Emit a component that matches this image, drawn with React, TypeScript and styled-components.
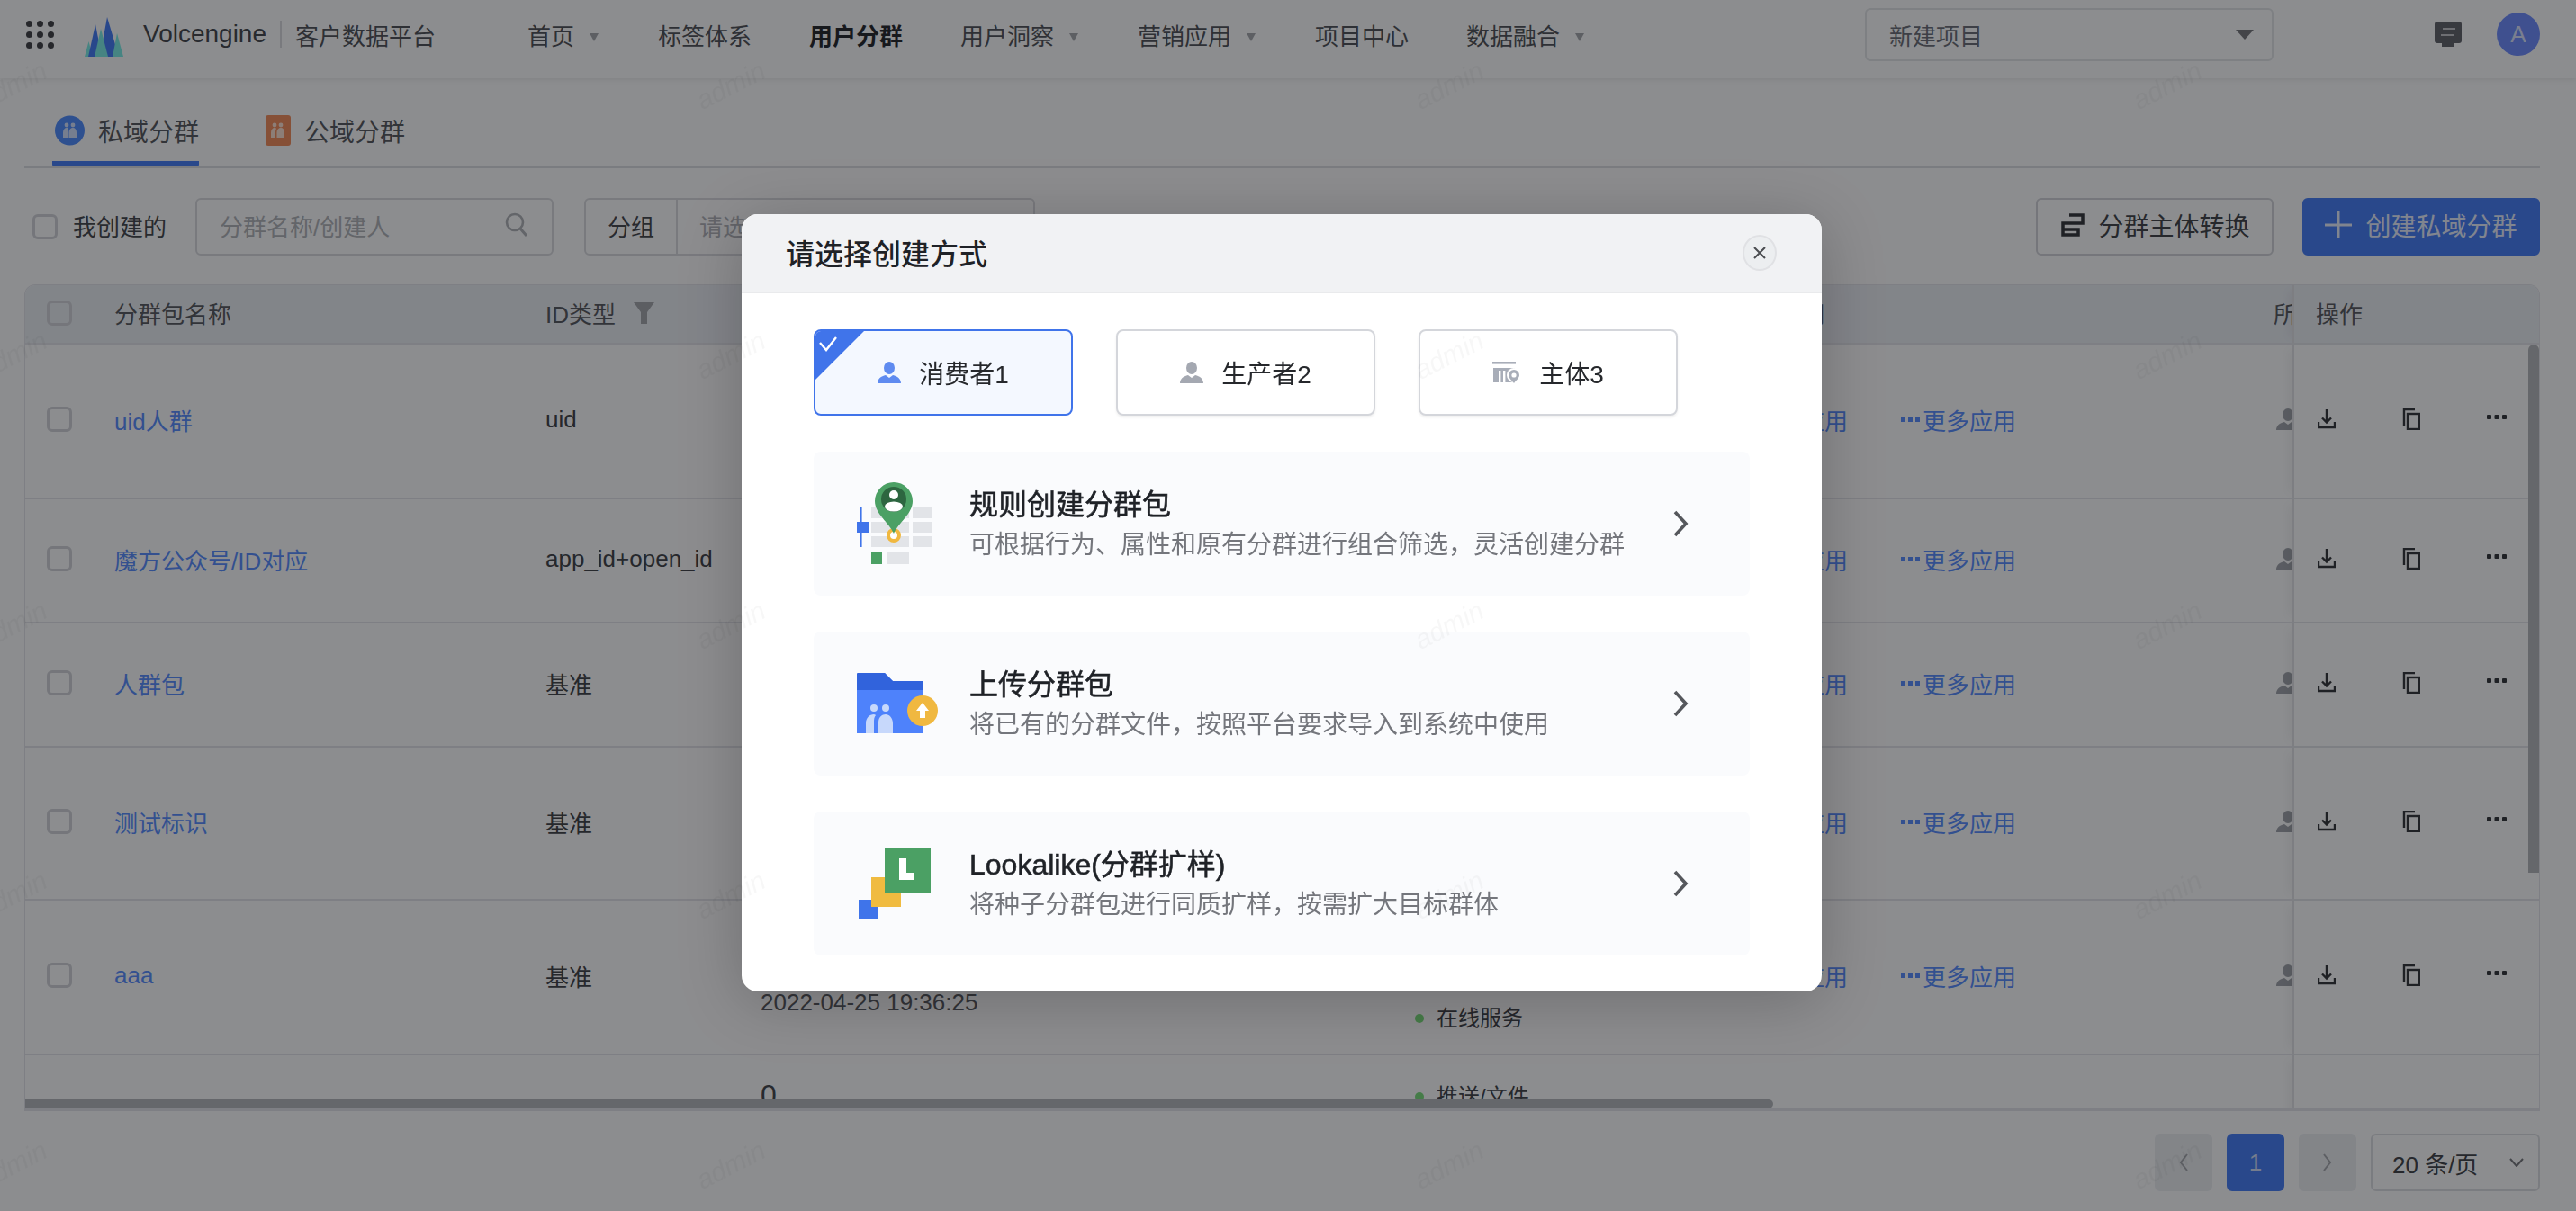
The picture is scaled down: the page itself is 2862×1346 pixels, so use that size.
import * as React from 'react';
import styled, { createGlobalStyle } from 'styled-components';

const GlobalStyle = createGlobalStyle`
    html, body {
        margin: 0;
        padding: 0;
        height: 100%;
        overflow: hidden;
        background: #fff;
    }
    body, button {
        font-family: "Liberation Sans", "Noto Sans CJK SC", sans-serif;
    }
`;

const Page = styled.div`
    display: flex;
    flex-direction: column;
    width: 2862px;
    height: 1346px;
    overflow: hidden;
    background: #fff;
    color: #55575c;
    font-size: 26px;
`;

const Header = styled.header`
    display: flex;
    align-items: center;
    flex: 0 0 87px;
    box-sizing: border-box;
    padding: 0 40px 11px 29px;
    box-shadow: 0 2px 6px rgba(0, 0, 0, 0.08);
`;

const Dots = styled.div`
    display: grid;
    grid-template-columns: repeat(3, 7px);
    grid-auto-rows: 7px;
    gap: 5px;
    margin-right: 34px;

    i {
        background: #45464a;
        border-radius: 50%;
    }
`;

const Logo = styled.svg`
    margin-top: 6px;
`;

const Brand = styled.span`
    margin-left: 22px;
    font-size: 28px;
    color: #4a4c50;
    padding-right: 15px;
    border-right: 2px solid #dcdde0;
    line-height: 30px;
`;

const Product = styled.span`
    margin-left: 15px;
    width: 258px;
    color: #55575c;
`;

const Nav = styled.nav`
    display: flex;
    align-items: center;
    gap: 64px;
`;

const NavItem = styled.span<{ $active?: boolean }>`
    display: flex;
    align-items: center;
    font-weight: ${props => (props.$active ? 700 : 400)};
    color: ${props => (props.$active ? '#2a2c30' : '#55575c')};
`;

const NavCaret = styled.i`
    width: 0;
    height: 0;
    margin: 6px 2px 0 17px;
    border-left: 5px solid transparent;
    border-right: 5px solid transparent;
    border-top: 9px solid #a9abb0;
`;

const ProjectSelect = styled.div`
    display: flex;
    align-items: center;
    justify-content: space-between;
    box-sizing: border-box;
    width: 454px;
    height: 59px;
    margin-left: auto;
    padding: 0 20px 0 25px;
    border: 2px solid #e6e7ea;
    border-radius: 6px;
    color: #70727a;
`;

const SelectCaret = styled.i`
    width: 0;
    height: 0;
    border-left: 10px solid transparent;
    border-right: 10px solid transparent;
    border-top: 11px solid #7c7d80;
`;

const MessageIcon = styled.svg`
    margin-left: 179px;
`;

const Avatar = styled.div`
    display: flex;
    align-items: center;
    justify-content: center;
    width: 48px;
    height: 48px;
    margin-left: 39px;
    border-radius: 50%;
    background: #7490ff;
    color: #dfe5ff;
    font-size: 26px;
`;

const Main = styled.main`
    display: flex;
    flex-direction: column;
    flex: 1;
    min-height: 0;
    padding: 0 40px 0 27px;
`;

const Tabs = styled.div`
    display: flex;
    flex: 0 0 98px;
    box-sizing: border-box;
    gap: 71px;
    padding-left: 31px;
    border-bottom: 2px solid #dfe0e4;
`;

const Tab = styled.div<{ $active?: boolean }>`
    display: flex;
    align-items: center;
    gap: 15px;
    height: 98px;
    box-sizing: border-box;
    padding: 24px 0 0 3px;
    font-size: 28px;
    color: #5c5e63;
    border-bottom: ${props => (props.$active ? '6px solid #4c82f8' : '6px solid transparent')};
    border-radius: 0 0 2px 2px;
`;

const Toolbar = styled.div`
    display: flex;
    align-items: center;
    flex: 0 0 64px;
    margin: 33px 0 32px;
`;

const Checkbox = styled.span`
    display: inline-block;
    flex: none;
    box-sizing: border-box;
    width: 28px;
    height: 28px;
    border: 3px solid #d5d6da;
    border-radius: 6px;
`;

const OwnerCheck = styled.label`
    display: flex;
    align-items: center;
    gap: 17px;
    margin: 0 32px 0 9px;
    padding-bottom: 4px;
    color: #4a4c50;

    ${Checkbox} {
        margin-top: 4px;
    }
`;

const Field = styled.div`
    display: flex;
    align-items: center;
    justify-content: space-between;
    box-sizing: border-box;
    width: 398px;
    height: 64px;
    padding: 0 26px 4px 25px;
    border: 2px solid #dcdde1;
    border-radius: 6px;
    color: #b4b6bb;
`;

const GroupField = styled.div`
    display: flex;
    align-items: center;
    box-sizing: border-box;
    width: 501px;
    height: 64px;
    margin-left: 34px;
    border: 2px solid #dcdde1;
    border-radius: 6px;
    color: #b4b6bb;
`;

const GroupLabel = styled.span`
    display: flex;
    align-items: center;
    align-self: stretch;
    padding: 0 24px 4px;
    margin-right: 24px;
    border-right: 2px solid #dcdde1;
    color: #4a4c50;
`;

const GroupPlaceholder = styled.span`
    padding-bottom: 4px;
`;

const Hint = styled.span`
    display: flex;
    align-items: center;
    gap: 27px;
    margin-left: 45px;
    color: #5d91ff;
`;

const Buttons = styled.div`
    display: flex;
    gap: 32px;
    margin-left: auto;
`;

const Button = styled.button<{ $primary?: boolean }>`
    display: flex;
    align-items: center;
    justify-content: center;
    gap: 15px;
    width: 264px;
    height: 64px;
    padding: 0 0 4px;
    font-size: 28px;
    border-radius: 6px;
    color: ${props => (props.$primary ? '#eaf0ff' : '#45474c')};
    border: 2px solid ${props => (props.$primary ? '#4c82f8' : '#d5d6da')};
    background: ${props => (props.$primary ? '#4c82f8' : '#fff')};
`;

const Table = styled.section`
    position: relative;
    flex: 0 0 919px;
    overflow: hidden;
    box-sizing: border-box;
    border: 1px solid #e5e6eb;
    border-bottom-width: 3px;
    border-radius: 12px 12px 0 0;
`;

const columns = '99px 479px 239px 727px 377px 577px 21px 1fr';

const HeadRow = styled.div`
    display: grid;
    grid-template-columns: ${columns};
    grid-template-rows: minmax(0, 1fr);
    align-items: center;
    box-sizing: border-box;
    height: 66px;
    padding-bottom: 3px;
    background: #edf0f5;
    border-bottom: 2px solid #e5e6eb;
    white-space: nowrap;
`;

const BodyRow = styled.div<{ $height: number }>`
    display: grid;
    grid-template-columns: ${columns};
    grid-template-rows: minmax(0, 1fr);
    align-items: center;
    box-sizing: border-box;
    height: ${props => props.$height}px;
    padding-bottom: 4px;
    border-bottom: 2px solid #e5e6eb;
    color: #45474c;
    white-space: nowrap;
`;

const CheckCell = styled.div`
    display: flex;
    padding-left: 24px;
`;

const HeadCell = styled.div`
    display: flex;
    align-items: center;
    gap: 20px;
    color: #5c5e63;
`;

const AppsHead = styled(HeadCell)`
    padding-left: 27px;
`;

const Clipped = styled.div`
    display: flex;
    overflow: hidden;

    svg {
        flex: none;
    }
`;

const UserCell = styled(Clipped)`
    padding-left: 3px;
`;

const NameLink = styled.a`
    color: #5d91ff;
`;

const CountCell = styled.div`
    align-self: start;
    padding-top: 25px;
`;

const Count = styled.span`
    font-size: 32px;
    line-height: 38px;
    color: #4a4c50;
`;

const DateCell = styled.div`
    align-self: start;
    padding-top: 98px;
    line-height: 30px;
    color: #5c5e63;
`;

const StatusCell = styled.div<{ $top: number }>`
    align-self: start;
    padding-top: ${props => props.$top}px;
`;

const Status = styled.span`
    display: flex;
    align-items: center;
    gap: 14px;
    line-height: 36px;
    font-size: 24px;

    &::before {
        content: '';
        width: 10px;
        height: 10px;
        border-radius: 50%;
        background: #7fe07f;
    }
`;

const Links = styled.div`
    display: flex;
    align-items: center;
    gap: 59px;
    color: #5d91ff;
`;

const More = styled.span`
    display: flex;
    align-items: center;
    gap: 2px;
`;

const Ops = styled.div`
    display: flex;
    align-items: center;
    align-self: stretch;
    box-sizing: border-box;
    margin-bottom: -4px;
    padding-left: 26px;
    border-left: 2px solid #e3e4e8;
    box-shadow: -10px 0 10px -6px rgba(0, 0, 0, 0.05);
`;

const HeadOps = styled(Ops)`
    margin-bottom: -3px;
    padding: 0 0 3px 24px;
    color: #5c5e63;
`;

const OpIcon = styled.svg`
    flex: none;
    margin: 0 74px 4px 0;
`;

const HScroll = styled.div`
    position: absolute;
    left: 0;
    bottom: 0;
    width: 1942px;
    height: 10px;
    background: #b9bbbe;
    border-radius: 0 5px 5px 0;
`;

const VScroll = styled.div`
    position: absolute;
    right: 0;
    top: 66px;
    width: 12px;
    height: 587px;
    background: #b9bbbe;
    border-radius: 6px 6px 0 0;
`;

const Pager = styled.div`
    display: flex;
    justify-content: flex-end;
    gap: 16px;
    margin-top: 25px;
`;

const PageButton = styled.div<{ $active?: boolean }>`
    display: flex;
    align-items: center;
    justify-content: center;
    width: 64px;
    height: 64px;
    border-radius: 6px;
    background: ${props => (props.$active ? '#4c82f8' : '#eef0f3')};
    color: #d8e2fb;
`;

const SizeSelect = styled.div`
    display: flex;
    align-items: center;
    justify-content: space-between;
    box-sizing: border-box;
    width: 188px;
    height: 64px;
    padding: 0 16px 0 22px;
    border: 2px solid #dfe0e4;
    border-radius: 6px;
    color: #45474c;
`;

const Overlay = styled.div`
    position: fixed;
    inset: 0;
    background: rgba(0, 2, 6, 0.45);
`;

const Modal = styled.div`
    position: fixed;
    left: 824px;
    top: 238px;
    width: 1200px;
    height: 864px;
    overflow: hidden;
    background: #fff;
    border-radius: 18px;
    box-shadow: 0 10px 70px rgba(0, 0, 0, 0.22);
`;

const ModalHeader = styled.div`
    display: flex;
    align-items: center;
    justify-content: space-between;
    box-sizing: border-box;
    height: 88px;
    padding: 0 50px 0 49px;
    background: #f1f2f4;
    border-bottom: 2px solid #e9eaec;
`;

const ModalTitle = styled.h2`
    margin: 0 0 2px;
    font-size: 32px;
    font-weight: 500;
    color: #1f2227;
`;

const CloseButton = styled.button`
    display: flex;
    align-items: center;
    justify-content: center;
    width: 38px;
    height: 40px;
    padding: 0;
    border: 2px solid #e0e1e4;
    border-radius: 50%;
    background: #eceef0;
`;

const ModalBody = styled.div`
    display: flex;
    flex-direction: column;
    gap: 40px;
    padding: 40px 80px;
`;

const Types = styled.div`
    display: flex;
    gap: 48px;
`;

const TypeCard = styled.div<{ $active?: boolean }>`
    position: relative;
    display: flex;
    align-items: center;
    justify-content: center;
    gap: 20px;
    box-sizing: border-box;
    width: 288px;
    height: 96px;
    overflow: hidden;
    font-size: 28px;
    color: #26282c;
    border-radius: 8px;
    border: 2px solid ${props => (props.$active ? '#4074ea' : '#d4d6db')};
    background: ${props => (props.$active ? '#f4f8ff' : '#fff')};
    box-shadow: ${props => (props.$active ? 'none' : '0 2px 3px rgba(0, 0, 0, 0.06)')};
`;

const Corner = styled.svg`
    position: absolute;
    left: -2px;
    top: -2px;
`;

const Options = styled.div`
    display: flex;
    flex-direction: column;
    gap: 40px;
`;

const Option = styled.div`
    display: flex;
    align-items: center;
    box-sizing: border-box;
    height: 160px;
    padding: 0 67px 0 48px;
    background: #fafbfd;
    border-radius: 8px;
`;

const OptionIcon = styled.div`
    display: flex;
    flex: 0 0 125px;
`;

const OptionText = styled.div`
    display: flex;
    flex-direction: column;
    flex: 1;
    gap: 6px;
    padding-top: 2px;
`;

const OptionTitle = styled.div`
    font-size: 32px;
    line-height: 40px;
    font-weight: 400;
    color: #1f2227;
    -webkit-text-stroke: 0.6px #1f2227;
`;

const OptionDesc = styled.div`
    font-size: 28px;
    line-height: 38px;
    color: #74767c;
`;

const Watermarks = styled.div`
    position: fixed;
    inset: 0;
    display: grid;
    grid-template-columns: repeat(4, 798px);
    grid-auto-rows: 300px;
    margin: -55px 0 0 -385px;
    pointer-events: none;
`;

const Watermark = styled.span`
    display: flex;
    align-items: center;
    justify-content: center;
    font-size: 30px;
    font-style: italic;
    color: rgba(0, 0, 0, 0.03);
    transform: rotate(-27deg);
`;

const UserGlyph = ({ color }: { color: string }) => (
    <svg width="26" height="24" viewBox="0 0 26 24">
        <ellipse cx="13" cy="7" rx="6" ry="7" fill={color} />
        <path d="M0 24c0-5 4-8 9-9l4 3 4-3c5 1 9 4 9 9z" fill={color} />
    </svg>
);

const PeopleGlyph = ({ fill }: { fill: string }) => (
    <>
        <circle cx="13" cy="11" r="2.4" fill={fill} />
        <circle cx="20" cy="11" r="2.4" fill={fill} />
        <path d="M9 25v-6c0-3 2-5 4-5 1 0 2 .5 2 1-1 1-1 3-1 4v6zM15.5 25v-6c0-3 2-5 4.5-5s4 2 4 5v6z" fill={fill} />
    </>
);

const rows = [
    { name: 'uid人群', id: 'uid', height: 172 },
    { name: '魔方公众号/ID对应', id: 'app_id+open_id', height: 138 },
    { name: '人群包', id: '基准', height: 138 },
    { name: '测试标识', id: '基准', height: 170 },
    { name: 'aaa', id: '基准', height: 172, detail: true }
];

const DownloadIcon = () => (
    <OpIcon width="20" height="22" viewBox="0 0 20 22">
        <path d="M10 0v14M5 9.5l5 5 5-5M1 14v6h18v-6" fill="none" stroke="#3a3b3e" strokeWidth="2.4" />
    </OpIcon>
);

const CopyIcon = () => (
    <OpIcon width="20" height="24" viewBox="0 0 20 24">
        <path d="M14 1H2v18" fill="none" stroke="#3a3b3e" strokeWidth="2.4" />
        <rect x="6" y="6" width="13" height="17" fill="none" stroke="#3a3b3e" strokeWidth="2.4" />
    </OpIcon>
);

const MoreOpIcon = styled.svg`
    margin-bottom: 8px;
`;

const DotsIcon = () => (
    <MoreOpIcon width="22" height="6" viewBox="0 0 22 6">
        <rect x="0" y="0" width="5" height="5" rx="1" fill="#3a3b3e" />
        <rect x="8.5" y="0" width="5" height="5" rx="1" fill="#3a3b3e" />
        <rect x="17" y="0" width="5" height="5" rx="1" fill="#3a3b3e" />
    </MoreOpIcon>
);

const DotsBlue = () => (
    <svg width="22" height="5" viewBox="0 0 22 5">
        <rect x="0" y="0" width="5" height="5" fill="#5d91ff" />
        <rect x="8" y="0" width="5" height="5" fill="#5d91ff" />
        <rect x="16" y="0" width="5" height="5" fill="#5d91ff" />
    </svg>
);

const Chevron = () => (
    <svg width="20" height="30" viewBox="0 0 20 30">
        <path d="M4 2l12 13L4 28" fill="none" stroke="#55575c" strokeWidth="3.6" />
    </svg>
);

const RuleIcon = () => (
    <svg width="84" height="92" viewBox="0 0 84 92">
        <g fill="#e2e4e8">
            <rect x="16" y="27" width="42" height="13" />
            <rect x="62" y="27" width="21" height="13" />
            <rect x="16" y="44" width="42" height="12" />
            <rect x="62" y="44" width="21" height="12" />
            <rect x="16" y="60" width="42" height="12" />
            <rect x="62" y="60" width="21" height="12" />
            <rect x="33" y="78" width="25" height="13" />
        </g>
        <rect x="16" y="78" width="12" height="13" fill="#4ba064" />
        <rect x="3" y="27" width="2.6" height="45" fill="#4074ea" />
        <rect x="0" y="44" width="13" height="12" fill="#4074ea" />
        <circle cx="41" cy="59" r="6" fill="#fff" stroke="#f0b840" strokeWidth="4" />
        <path d="M41 57C36 45 20 35 20 21a21 21 0 0 1 42 0C62 35 46 45 41 57z" fill="#4ba064" />
        <circle cx="41" cy="19" r="14" fill="#2d6640" />
        <circle cx="41" cy="14" r="5" fill="#fff" />
        <ellipse cx="41" cy="27" rx="10" ry="5.5" fill="#fff" />
    </svg>
);

const UploadIcon = () => (
    <svg width="90" height="68" viewBox="0 0 90 68">
        <path d="M0 9a1 1 0 0 1 1-1v0V1a1 1 0 0 1 1-1h29l9 9h33v58H0z" fill="#4e82fb" />
        <path d="M0 1a1 1 0 0 1 1-1h30l9 9h33v10H0z" fill="#3163dc" />
        <circle cx="19" cy="39" r="4" fill="#c7d8fb" />
        <circle cx="32" cy="39" r="4" fill="#c7d8fb" />
        <path d="M10 67V56c0-6 4-10 9-10 1 0 2 1 2 1-2 2-2 5-2 8v12zM24 67V55c0-6 4-9 8-9 4 0 8 4 8 10v11z" fill="#c7d8fb" />
        <circle cx="73" cy="42" r="17" fill="#f0b840" />
        <path d="M73 33l7 9h-4v8h-6v-8h-4z" fill="#fff" />
    </svg>
);

const LookalikeIcon = () => (
    <svg width="82" height="80" viewBox="-2 0 82 80">
        <rect x="0" y="58" width="21" height="22" fill="#3f74ea" />
        <rect x="14" y="33" width="33" height="33" fill="#f0bb40" />
        <rect x="29" y="0" width="51" height="51" fill="#4ba064" />
        <path d="M45 12h8v16h9v8H45z" fill="#fff" />
    </svg>
);

const options = [
    { title: '规则创建分群包', desc: '可根据行为、属性和原有分群进行组合筛选，灵活创建分群', icon: <RuleIcon /> },
    { title: '上传分群包', desc: '将已有的分群文件，按照平台要求导入到系统中使用', icon: <UploadIcon /> },
    { title: 'Lookalike(分群扩样)', desc: '将种子分群包进行同质扩样，按需扩大目标群体', icon: <LookalikeIcon /> }
];

export default function App() {
    return (
        <>
            <GlobalStyle />
            <Page>
                <Header>
                    <Dots>
                        {Array.from({ length: 9 }, (_, i) => (
                            <i key={i} />
                        ))}
                    </Dots>
                    <Logo width="43" height="44" viewBox="0 0 43 44">
                        <path d="M0 44l4.5-17L9 44z" fill="#80efe8" />
                        <path d="M4 44l8-36 7 36z" fill="#4a80f8" />
                        <path d="M17 44l8-44 13 44z" fill="#4a80f8" />
                        <path d="M11 44l7-31 8 31z" fill="#80efe8" />
                        <path d="M31 44l5-26 7 26z" fill="#80efe8" />
                    </Logo>
                    <Brand>Volcengine</Brand>
                    <Product>客户数据平台</Product>
                    <Nav>
                        <NavItem>
                            首页
                            <NavCaret />
                        </NavItem>
                        <NavItem>标签体系</NavItem>
                        <NavItem $active>用户分群</NavItem>
                        <NavItem>
                            用户洞察
                            <NavCaret />
                        </NavItem>
                        <NavItem>
                            营销应用
                            <NavCaret />
                        </NavItem>
                        <NavItem>项目中心</NavItem>
                        <NavItem>
                            数据融合
                            <NavCaret />
                        </NavItem>
                    </Nav>
                    <ProjectSelect>
                        新建项目
                        <SelectCaret />
                    </ProjectSelect>
                    <MessageIcon width="30" height="28" viewBox="0 0 30 28">
                        <rect x="0" y="0" width="30" height="24" rx="3" fill="#66686e" />
                        <rect x="8" y="24" width="14" height="4" fill="#66686e" />
                        <path d="M9 8h14M7 15h14" stroke="#c8c9cc" strokeWidth="2" />
                    </MessageIcon>
                    <Avatar>A</Avatar>
                </Header>
                <Main>
                    <Tabs>
                        <Tab $active>
                            <svg width="33" height="34" viewBox="0 0 33 34">
                                <circle cx="16.5" cy="17" r="16.5" fill="#5590ff" />
                                <PeopleGlyph fill="#d8e4ff" />
                            </svg>
                            私域分群
                        </Tab>
                        <Tab>
                            <svg width="28" height="34" viewBox="3 0 28 34">
                                <rect x="3" y="0" width="28" height="34" rx="3" fill="#f59060" />
                                <PeopleGlyph fill="#ffe3d4" />
                            </svg>
                            公域分群
                        </Tab>
                    </Tabs>
                    <Toolbar>
                        <OwnerCheck>
                            <Checkbox />
                            我创建的
                        </OwnerCheck>
                        <Field>
                            分群名称/创建人
                            <svg width="26" height="28" viewBox="0 0 26 28">
                                <circle cx="11" cy="11" r="9" fill="none" stroke="#b4b6bb" strokeWidth="2.6" />
                                <path d="M17 18l7 8" stroke="#b4b6bb" strokeWidth="3" />
                            </svg>
                        </Field>
                        <GroupField>
                            <GroupLabel>分组</GroupLabel>
                            <GroupPlaceholder>请选择分组</GroupPlaceholder>
                        </GroupField>
                        <Hint>
                            <svg width="8" height="26" viewBox="0 0 8 26">
                                <rect width="8" height="26" rx="2" fill="#5d91ff" />
                            </svg>
                            符合条件的分群包
                        </Hint>
                        <Buttons>
                            <Button>
                                <svg width="28" height="26" viewBox="0 0 28 26">
                                    <path d="M11 2h15v9H4v13h17v-6H4" fill="none" stroke="#3a3b3e" strokeWidth="3.5" />
                                </svg>
                                分群主体转换
                            </Button>
                            <Button $primary>
                                <svg width="30" height="30" viewBox="0 0 30 30">
                                    <path d="M15 0v30M0 15h30" stroke="#eaf0ff" strokeWidth="3" />
                                </svg>
                                创建私域分群
                            </Button>
                        </Buttons>
                    </Toolbar>
                    <Table>
                        <HeadRow>
                            <CheckCell>
                                <Checkbox />
                            </CheckCell>
                            <HeadCell>分群包名称</HeadCell>
                            <HeadCell>
                                ID类型
                                <svg width="23" height="24" viewBox="0 0 23 24">
                                    <path d="M0 0h23l-8 11v13h-7V11z" fill="#a8aaae" />
                                </svg>
                            </HeadCell>
                            <span />
                            <span />
                            <AppsHead>应用</AppsHead>
                            <Clipped>
                                <HeadCell>所属</HeadCell>
                            </Clipped>
                            <HeadOps>操作</HeadOps>
                        </HeadRow>
                        {rows.map(row => (
                            <BodyRow key={row.name} $height={row.height}>
                                <CheckCell>
                                    <Checkbox />
                                </CheckCell>
                                <NameLink>{row.name}</NameLink>
                                <span>{row.id}</span>
                                {row.detail ? <DateCell>2022-04-25 19:36:25</DateCell> : <span />}
                                {row.detail ? (
                                    <StatusCell $top={113}>
                                        <Status>在线服务</Status>
                                    </StatusCell>
                                ) : (
                                    <span />
                                )}
                                <Links>
                                    <span>推送应用</span>
                                    <More>
                                        <DotsBlue />
                                        更多应用
                                    </More>
                                </Links>
                                <UserCell>
                                    <UserGlyph color="#a4a7ad" />
                                </UserCell>
                                <Ops>
                                    <DownloadIcon />
                                    <CopyIcon />
                                    <DotsIcon />
                                </Ops>
                            </BodyRow>
                        ))}
                        <BodyRow $height={172}>
                            <CheckCell />
                            <span />
                            <span />
                            <CountCell>
                                <Count>0</Count>
                            </CountCell>
                            <StatusCell $top={28}>
                                <Status>推送/文件</Status>
                            </StatusCell>
                            <span />
                            <span />
                            <Ops />
                        </BodyRow>
                        <VScroll />
                        <HScroll />
                    </Table>
                    <Pager>
                        <PageButton>
                            <svg width="12" height="24" viewBox="0 0 12 24">
                                <path d="M10 3L3 12l7 9" fill="none" stroke="#a9abb0" strokeWidth="2" />
                            </svg>
                        </PageButton>
                        <PageButton $active>1</PageButton>
                        <PageButton>
                            <svg width="12" height="24" viewBox="0 0 12 24">
                                <path d="M2 3l7 9-7 9" fill="none" stroke="#a9abb0" strokeWidth="2" />
                            </svg>
                        </PageButton>
                        <SizeSelect>
                            20 条/页
                            <svg width="16" height="10" viewBox="0 0 16 10">
                                <path d="M1 1l7 8 7-8" fill="none" stroke="#7c7d80" strokeWidth="2" />
                            </svg>
                        </SizeSelect>
                    </Pager>
                </Main>
            </Page>
            <Overlay />
            <Modal>
                <ModalHeader>
                    <ModalTitle>请选择创建方式</ModalTitle>
                    <CloseButton aria-label="close">
                        <svg width="16" height="16" viewBox="0 0 16 16">
                            <path d="M2 2l12 12M14 2L2 14" stroke="#4a4c50" strokeWidth="2" />
                        </svg>
                    </CloseButton>
                </ModalHeader>
                <ModalBody>
                    <Types>
                        <TypeCard $active>
                            <Corner width="60" height="60" viewBox="0 0 60 60">
                                <path d="M0 0h58L0 58z" fill="#4074ea" />
                                <path d="M7 15l7 8L25 9" fill="none" stroke="#fff" strokeWidth="2.4" />
                            </Corner>
                            <UserGlyph color="#5f8bf0" />
                            消费者1
                        </TypeCard>
                        <TypeCard>
                            <UserGlyph color="#a4a8b1" />
                            生产者2
                        </TypeCard>
                        <TypeCard>
                            <svg width="32" height="24" viewBox="0 0 32 24">
                                <rect x="0" y="0" width="26" height="2.6" fill="#a8adb8" />
                                <path d="M1 7h24v16H1z" fill="#a8adb8" />
                                <rect x="7" y="10" width="2.4" height="13" fill="#fff" />
                                <rect x="12" y="10" width="2.4" height="13" fill="#fff" />
                                <circle cx="24" cy="15" r="8" fill="#fff" />
                                <path d="M24 24c-3-4-6-6-6-9a6 6 0 0 1 12 0c0 3-3 5-6 9z" fill="#a8adb8" />
                                <circle cx="24" cy="15" r="2.6" fill="#fff" />
                            </svg>
                            主体3
                        </TypeCard>
                    </Types>
                    <Options>
                        {options.map(option => (
                            <Option key={option.title}>
                                <OptionIcon>{option.icon}</OptionIcon>
                                <OptionText>
                                    <OptionTitle>{option.title}</OptionTitle>
                                    <OptionDesc>{option.desc}</OptionDesc>
                                </OptionText>
                                <Chevron />
                            </Option>
                        ))}
                    </Options>
                </ModalBody>
            </Modal>
            <Watermarks>
                {Array.from({ length: 25 }, (_, i) => (
                    <Watermark key={i}>admin</Watermark>
                ))}
            </Watermarks>
        </>
    );
}
